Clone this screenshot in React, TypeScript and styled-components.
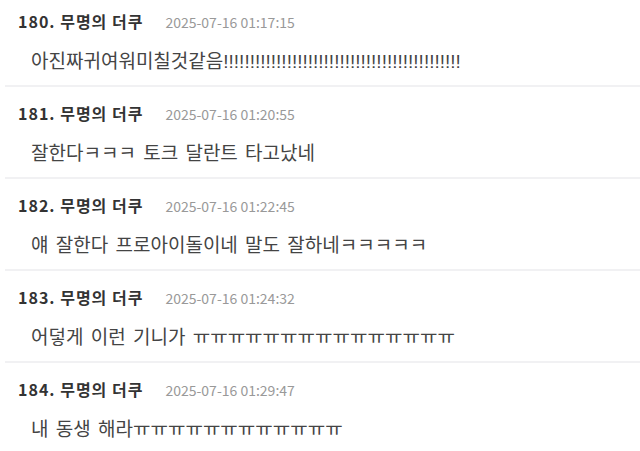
import React from 'react';
import styled, { createGlobalStyle } from 'styled-components';

const GlobalStyle = createGlobalStyle`
  html, body {
    margin: 0;
    padding: 0;
    background: #fff;
    overflow: hidden;
  }
  body {
    font-family: "Noto Sans CJK KR", "Noto Sans", sans-serif;
  }
`;

type Comment = {
  no: number;
  name: string;
  date: string;
  text: string;
};

const comments: Comment[] = [
  { no: 180, name: '무명의 더쿠', date: '2025-07-16 01:17:15', text: '아진짜귀여워미칠것같음!!!!!!!!!!!!!!!!!!!!!!!!!!!!!!!!!!!!!!!!!!!!!' },
  { no: 181, name: '무명의 더쿠', date: '2025-07-16 01:20:55', text: '잘한다ㅋㅋㅋ 토크 달란트 타고났네' },
  { no: 182, name: '무명의 더쿠', date: '2025-07-16 01:22:45', text: '얘 잘한다 프로아이돌이네 말도 잘하네ㅋㅋㅋㅋㅋ' },
  { no: 183, name: '무명의 더쿠', date: '2025-07-16 01:24:32', text: '어덯게 이런 기니가 ㅠㅠㅠㅠㅠㅠㅠㅠㅠㅠㅠㅠㅠㅠㅠ' },
  { no: 184, name: '무명의 더쿠', date: '2025-07-16 01:29:47', text: '내 동생 해라ㅠㅠㅠㅠㅠㅠㅠㅠㅠㅠㅠㅠ' },
];

const List = styled.ul`
  list-style: none;
  margin: -5px 0 0 5px;
  padding: 0;
`;

const Item = styled.li`
  padding: 15px 0 10px 13px;
  border-bottom: 2px solid #f1f1f3;
`;

const Header = styled.div`
  display: flex;
  align-items: baseline;
  gap: 22px;
  height: 22px;
  line-height: 22px;
`;

const Name = styled.span`
  font-size: 16px;
  font-weight: 700;
  letter-spacing: 1px;
  color: #333;
`;

const Date = styled.span`
  font-size: 14px;
  color: #999;
`;

const Body = styled.p`
  margin: 17px 0 0 13px;
  font-family: "Liberation Sans", "Noto Sans CJK KR", sans-serif;
  font-size: 19px;
  line-height: 26px;
  word-spacing: 2px;
  color: #444;
  white-space: nowrap;
`;

export default function App() {
  return (
    <>
      <GlobalStyle />
      <List>
        {comments.map(c => (
          <Item key={c.no}>
            <Header>
              <Name>{c.no}. {c.name}</Name>
              <Date>{c.date}</Date>
            </Header>
            <Body>{c.text}</Body>
          </Item>
        ))}
      </List>
    </>
  );
}
